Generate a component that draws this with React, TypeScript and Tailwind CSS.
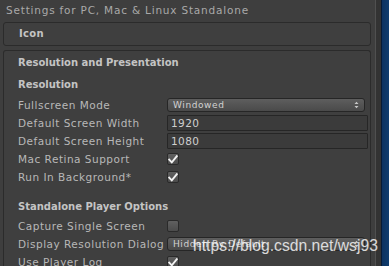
import React from "react";

const font = { fontFamily: '"DejaVu Sans", Verdana, sans-serif' };

function Check({ on }: { on?: boolean }) {
  return (
    <div className="flex h-[12px] w-[12px] items-center justify-center rounded-[2px] border border-[#2a2a2a] bg-gradient-to-b from-[#606060] to-[#4c4c4c]">
      {on && (
        <svg width="10" height="9" viewBox="0 0 10 9">
          <path d="M1.2 4.6 L3.8 7.3 L8.8 1.2" fill="none" stroke="#f2f2f2" strokeWidth="1.9" strokeLinecap="square" />
        </svg>
      )}
    </div>
  );
}

function Popup({ value }: { value: string }) {
  return (
    <div className="flex h-[14px] w-[198px] items-center justify-between rounded-[3px] border border-[#262626] bg-gradient-to-b from-[#5e5e5e] to-[#4a4a4a] pl-[5px] pr-[5px]">
      <span className="text-[9px] leading-none tracking-[0.6px] text-[#d2d2d2]">{value}</span>
      <svg width="5" height="8" viewBox="0 0 5 8">
        <path d="M0.5 3 L2.5 0.8 L4.5 3 Z M0.5 5 L2.5 7.2 L4.5 5 Z" fill="#c8c8c8" />
      </svg>
    </div>
  );
}

function Field({ value }: { value: string }) {
  return (
    <div className="flex h-[16px] w-[201px] items-center rounded-[1px] border border-[#262626] bg-[#3b3b3b] pl-[3px]">
      <span className="text-[10.5px] leading-none tracking-[0.4px] text-[#cfcfcf]">{value}</span>
    </div>
  );
}

function Row({ label, children }: { label: string; children: React.ReactNode }) {
  return (
    <div className="flex h-[18px] shrink-0 items-center pl-[14px]">
      <div className="w-[149px] text-[10.5px] leading-none tracking-[0.5px] text-[#b8b8b8]">{label}</div>
      {children}
    </div>
  );
}

function Heading({ text, h }: { text: string; h: string }) {
  return (
    <div className={`flex shrink-0 items-center pl-[14px] ${h}`}>
      <span className="text-[10px] font-bold leading-none tracking-[0px] text-[#c4c4c4]">{text}</span>
    </div>
  );
}

export default function App() {
  return (
    <div className="relative flex h-[266px] w-[389px] overflow-hidden bg-[#3e3e3e]" style={font}>
      <div className="flex w-[375px] shrink-0 flex-col">
        <div className="flex h-[22px] shrink-0 items-center pl-[6px] pb-[1px]">
          <span className="text-[10.5px] leading-none tracking-[0.8px] text-[#a9a9a9]">
            Settings for PC, Mac &amp; Linux Standalone
          </span>
        </div>

        <div className="ml-[3px] mr-[4px] flex h-[24px] shrink-0 items-center rounded-[3px] border border-[#2b2b2b] bg-[#3f3f3f] pl-[15px]">
          <span className="text-[10px] font-bold leading-none tracking-[0.3px] text-[#c4c4c4]">Icon</span>
        </div>

        <div className="ml-[3px] mr-[4px] mt-[4px] flex shrink-0 flex-col rounded-t-[3px] border border-b-0 border-[#2b2b2b] bg-[#3f3f3f]">
          <Heading text="Resolution and Presentation" h="h-[23px]" />
          <Heading text="Resolution" h="h-[22px]" />
          <Row label="Fullscreen Mode">
            <Popup value="Windowed" />
          </Row>
          <Row label="Default Screen Width">
            <Field value="1920" />
          </Row>
          <Row label="Default Screen Height">
            <Field value="1080" />
          </Row>
          <Row label="Mac Retina Support">
            <Check on />
          </Row>
          <Row label="Run In Background*">
            <Check on />
          </Row>
          <div className="h-[11px] shrink-0" />
          <Heading text="Standalone Player Options" h="h-[20px]" />
          <Row label="Capture Single Screen">
            <Check />
          </Row>
          <Row label="Display Resolution Dialog">
            <Popup value="Hidden By Default" />
          </Row>
          <Row label="Use Player Log">
            <Check on />
          </Row>
        </div>
      </div>

      <div className="w-[1px] shrink-0 bg-[#505050]" />
      <div className="w-[5px] shrink-0 bg-[#333333]" />
      <div className="w-[8px] shrink-0 border-l border-[#071b35] bg-gradient-to-r from-[#0c3260] to-[#0f3c6e]" />

      <div
        className="absolute left-[193px] top-[236px] text-[15.7px] leading-[20px] text-white/80"
        style={{ fontFamily: '"Liberation Sans", Arial, sans-serif' }}
      >
        https://blog.csdn.net/wsj93
      </div>
    </div>
  );
}
